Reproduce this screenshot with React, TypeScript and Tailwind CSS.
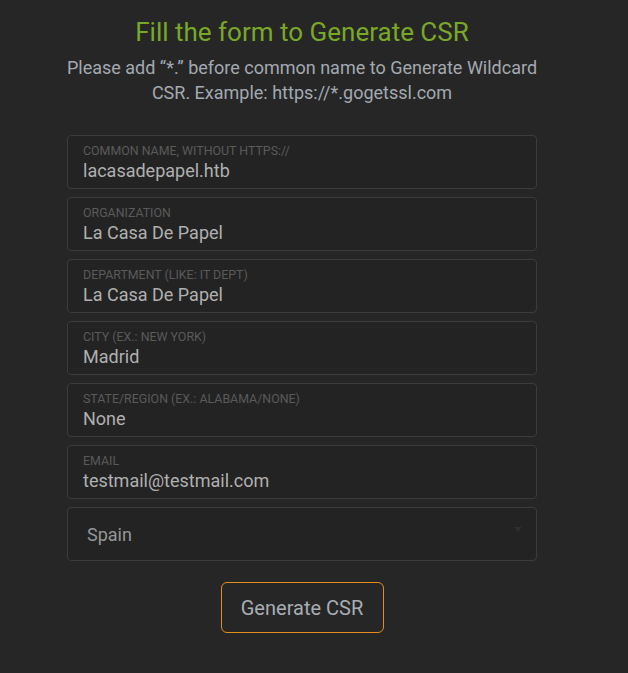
import React from "react";

const fields = [
  { label: "Common Name, without https://", value: "lacasadepapel.htb" },
  { label: "Organization", value: "La Casa De Papel" },
  { label: "Department (Like: IT Dept)", value: "La Casa De Papel" },
  { label: "City (Ex.: New York)", value: "Madrid" },
  { label: "State/Region (Ex.: Alabama/None)", value: "None" },
  { label: "Email", value: "testmail@testmail.com" },
];

export default function App() {
  return (
    <div
      className="w-[628px] h-[673px] bg-[#262626] pr-[24px]"
      style={{ fontFamily: "Roboto, 'Noto Sans', sans-serif" }}
    >
      <div className="flex flex-col items-center">
        <h1 className="mt-[15px] text-[26px] leading-[34px] text-[#79a828] font-normal">
          Fill the form to Generate CSR
        </h1>
        <p className="mt-[6px] w-[480px] text-center text-[18px] leading-[25px] text-[#a3a9b0]">
          Please add “*.” before common name to Generate Wildcard CSR. Example: https://*.gogetssl.com
        </p>
        <div className="mt-[30px] w-[470px] flex flex-col gap-[8px]">
          {fields.map((f) => (
            <div
              key={f.label}
              className="h-[54px] rounded-[4px] border border-[#3b3b3b] bg-[#232323] px-[15px] pt-[8px]"
            >
              <div className="text-[12.4px] leading-[14px] uppercase text-[#5a5a5a]">
                {f.label}
              </div>
              <div className="mt-[1px] text-[18px] leading-[24px] text-[#b0b0b0]">{f.value}</div>
            </div>
          ))}
          <div className="h-[54px] rounded-[4px] border border-[#3b3b3b] bg-[#232323] pl-[19px] pr-[14px] flex items-center justify-between">
            <span className="text-[18px] text-[#969696]">Spain</span>
            <span className="w-0 h-0 border-l-[4px] border-r-[4px] border-t-[5px] border-l-transparent border-r-transparent border-t-[#2e2e2e] mb-[10px]" />
          </div>
        </div>
        <button className="mt-[21px] w-[163px] h-[51px] rounded-[6px] border border-[#e38d1c] bg-transparent text-[20px] text-[#a8adb3]">
          Generate CSR
        </button>
      </div>
    </div>
  );
}
